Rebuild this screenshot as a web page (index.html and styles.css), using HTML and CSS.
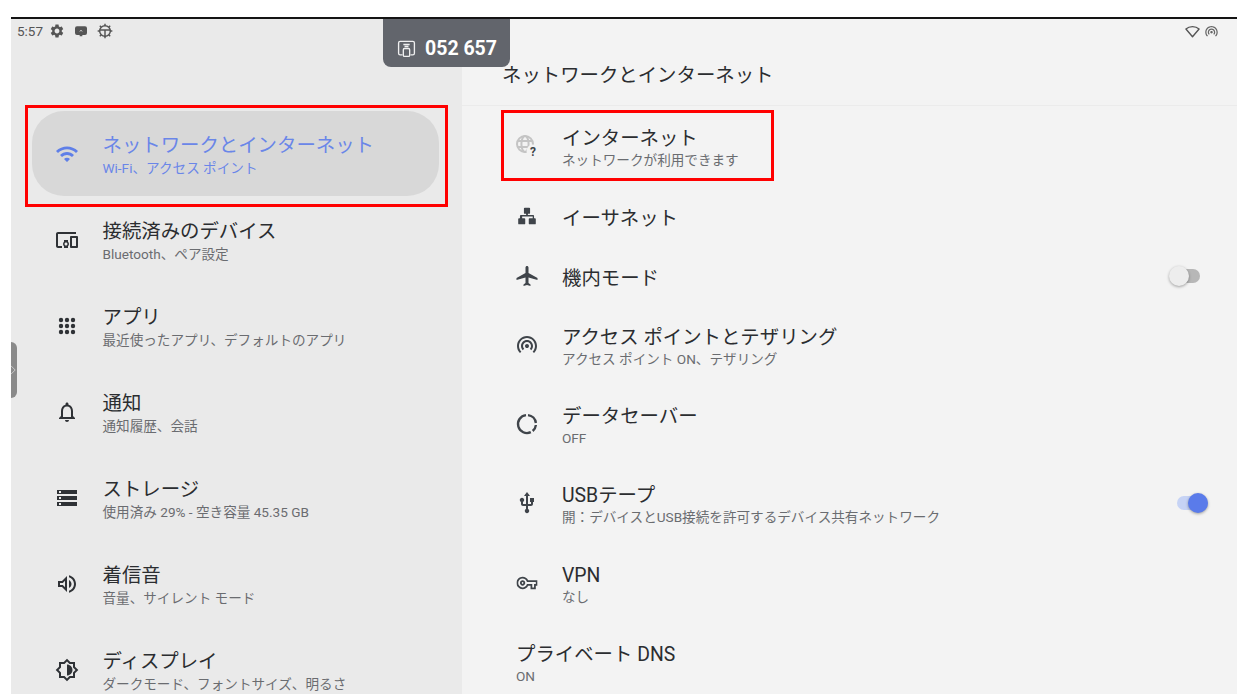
FILE: index.html
```html
<!DOCTYPE html>
<html lang="ja">
<head>
<meta charset="utf-8">
<title>ネットワークとインターネット</title>
<link rel="stylesheet" href="styles.css">
</head>
<body>
<div class="screen">
  <aside class="left">
    <div class="status">
      <span class="clock">5:57</span>
      <svg class="si" viewBox="0 0 24 24"><path d="M19.14 12.94c.04-.3.06-.61.06-.94 0-.32-.02-.64-.07-.94l2.03-1.58c.18-.14.23-.41.12-.61l-1.92-3.32c-.12-.22-.37-.29-.59-.22l-2.39.96c-.5-.38-1.03-.7-1.62-.94l-.36-2.54c-.04-.24-.24-.41-.48-.41h-3.84c-.24 0-.43.17-.47.41l-.36 2.54c-.59.24-1.13.57-1.62.94l-2.39-.96c-.22-.08-.47 0-.59.22L2.74 8.87c-.12.21-.08.47.12.61l2.03 1.58c-.05.3-.09.63-.09.94s.02.64.07.94l-2.03 1.58c-.18.14-.23.41-.12.61l1.92 3.32c.12.22.37.29.59.22l2.39-.96c.5.38 1.03.7 1.62.94l.36 2.54c.05.24.24.41.48.41h3.84c.24 0 .44-.17.47-.41l.36-2.54c.59-.24 1.13-.56 1.62-.94l2.39.96c.22.08.47 0 .59-.22l1.92-3.32c.12-.22.07-.47-.12-.61l-2.01-1.58zM12 15.6c-1.98 0-3.6-1.62-3.6-3.6s1.62-3.6 3.6-3.6 3.6 1.62 3.6 3.6-1.62 3.6-3.6 3.6z"/></svg>
      <svg class="si" viewBox="0 0 24 24"><path d="M6 5h12a3 3 0 0 1 3 3v7a3 3 0 0 1-3 3h-4v2h-4v-2H6a3 3 0 0 1-3-3V8a3 3 0 0 1 3-3z"/><path d="M10 12.500l2-1.500 2 1.500" fill="none" stroke="#eaeaea" stroke-width="1.200"/></svg>
      <svg class="si" viewBox="0 0 24 24"><g fill="none" stroke="#555" stroke-width="2.200"><circle cx="12" cy="12" r="8"/><path d="M4 10.500h16M12 10.500V20M12 1v3M12 20v3M1 12h3M20 12h3M4.200 4.200l2.200 2.200M17.600 17.600l2.200 2.200M4.200 19.800l2.200-2.200M17.600 6.400l2.200-2.200"/></g></svg>
    </div>
    <nav class="nav">
      <div class="nav-item selected">
        <svg class="icon" viewBox="0 0 24 24"><path d="M1 9l2 2c4.97-4.97 13.03-4.97 18 0l2-2C16.93 2.93 7.08 2.93 1 9zm8 8l3 3 3-3c-1.65-1.66-4.34-1.66-6 0zm-4-4l2 2c2.76-2.76 7.24-2.76 10 0l2-2C15.14 9.14 8.87 9.14 5 13z"/></svg>
        <div class="texts"><div class="title">ネットワークとインターネット</div><div class="sub">Wi-Fi、アクセス ポイント</div></div>
      </div>
      <div class="nav-item">
        <svg class="icon" viewBox="0 0 24 24"><path d="M3 6h18V4H3c-1.1 0-2 .9-2 2v12c0 1.1.9 2 2 2h4v-2H3V6zm10 6H9v1.78c-.61.55-1 1.33-1 2.22s.39 1.67 1 2.22V20h4v-1.78c.61-.55 1-1.34 1-2.22s-.39-1.67-1-2.22V12zm-2 5.5c-.83 0-1.5-.67-1.5-1.5s.67-1.5 1.5-1.5 1.5.67 1.5 1.5-.67 1.5-1.5 1.5zM22 8h-6c-.5 0-1 .5-1 1v10c0 .5.5 1 1 1h6c.5 0 1-.5 1-1V9c0-.5-.5-1-1-1zm-1 10h-4v-8h4v8z"/></svg>
        <div class="texts"><div class="title">接続済みのデバイス</div><div class="sub">Bluetooth、ペア設定</div></div>
      </div>
      <div class="nav-item">
        <svg class="icon" viewBox="0 0 24 24"><circle cx="6" cy="6" r="2.200"/><circle cx="12" cy="6" r="2.200"/><circle cx="18" cy="6" r="2.200"/><circle cx="6" cy="12" r="2.200"/><circle cx="12" cy="12" r="2.200"/><circle cx="18" cy="12" r="2.200"/><circle cx="6" cy="18" r="2.200"/><circle cx="12" cy="18" r="2.200"/><circle cx="18" cy="18" r="2.200"/></svg>
        <div class="texts"><div class="title">アプリ</div><div class="sub">最近使ったアプリ、デフォルトのアプリ</div></div>
      </div>
      <div class="nav-item">
        <svg class="icon" viewBox="0 0 24 24"><path d="M12 22c1.1 0 2-.9 2-2h-4c0 1.1.9 2 2 2zm6-6v-5c0-3.07-1.63-5.64-4.5-6.32V4c0-.83-.67-1.5-1.5-1.5s-1.5.67-1.5 1.5v.68C7.64 5.36 6 7.92 6 11v5l-2 2v1h16v-1l-2-2zm-2 1H8v-6c0-2.48 1.51-4.5 4-4.5s4 2.02 4 4.5v6z"/></svg>
        <div class="texts"><div class="title">通知</div><div class="sub">通知履歴、会話</div></div>
      </div>
      <div class="nav-item">
        <svg class="icon" viewBox="0 0 24 24"><path d="M2 20h20v-4H2v4zm2-3h2v2H4v-2zM2 4v4h20V4H2zm4 3H4V5h2v2zm-4 7h20v-4H2v4zm2-3h2v2H4v-2z"/></svg>
        <div class="texts"><div class="title">ストレージ</div><div class="sub">使用済み 29% - 空き容量 45.35 GB</div></div>
      </div>
      <div class="nav-item">
        <svg class="icon" viewBox="0 0 24 24"><path d="M3 9v6h4l5 5V4L7 9H3zm7-.17v6.34L7.83 13H5v-2h2.83L10 8.83zM16.5 12c0-1.77-1.02-3.29-2.5-4.03v8.05c1.48-.73 2.5-2.25 2.500-4.020zM14 3.230v2.060c2.890.86 5 3.540 5 6.710s-2.110 5.850-5 6.710v2.060c4.010-.91 7-4.490 7-8.770s-2.990-7.860-7-8.770z"/></svg>
        <div class="texts"><div class="title">着信音</div><div class="sub">音量、サイレント モード</div></div>
      </div>
      <div class="nav-item">
        <svg class="icon" viewBox="0 0 24 24"><path d="M20 15.31L23.31 12 20 8.69V4h-4.69L12 .69 8.69 4H4v4.69L.69 12 4 15.31V20h4.69L12 23.31 15.31 20H20v-4.69zm-2-.83V18h-3.52L12 20.48 9.52 18H6v-3.52L3.52 12 6 9.52V6h3.52L12 3.52 14.48 6H18v3.52L20.48 12 18 14.48zM12 6.5v11c3.03 0 5.5-2.47 5.5-5.5S15.03 6.5 12 6.5z"/></svg>
        <div class="texts"><div class="title">ディスプレイ</div><div class="sub">ダークモード、フォントサイズ、明るさ</div></div>
      </div>
    </nav>
  </aside>

  <main class="right">
    <div class="status status-right">
      <svg class="si-r" viewBox="0 0 24 24"><path d="M12 20.500L1.500 8C7 3 17 3 22.500 8z" fill="none" stroke="#555" stroke-width="2.200" stroke-linejoin="round"/></svg>
      <svg class="si-r" viewBox="0 0 24 24"><path d="M12 11c-1.100 0-2 .9-2 2 0 .55.23 1.050.59 1.410.36.36.86.59 1.410.59s1.050-.23 1.410-.59c.36-.36.59-.86.59-1.410 0-1.100-.9-2-2-2zm6 2c0-3.310-2.690-6-6-6s-6 2.690-6 6c0 1.660.68 3.150 1.760 4.240l1.420-1.420C8.450 15.100 8 14.110 8 13c0-2.210 1.790-4 4-4s4 1.790 4 4c0 1.110-.45 2.100-1.180 2.820l1.420 1.420C17.320 16.150 18 14.660 18 13zM12 3C6.480 3 2 7.480 2 13c0 2.760 1.120 5.260 2.930 7.070l1.420-1.420C4.900 17.210 4 15.210 4 13c0-4.420 3.580-8 8-8s8 3.580 8 8c0 2.210-.9 4.210-2.350 5.650l1.420 1.420C20.880 18.260 22 15.760 22 13c0-5.520-4.480-10-10-10z"/></svg>
    </div>
    <header class="page-title">ネットワークとインターネット</header>
    <div class="rows">
      <div class="row tall">
        <svg class="icon" viewBox="0 0 24 24"><g fill="none" stroke="#c4c4c4" stroke-width="2"><circle cx="10" cy="10" r="8"/><ellipse cx="10" cy="10" rx="3.600" ry="8"/><path d="M2.500 7h15M2.500 13h15"/></g><circle cx="18" cy="17" r="6.500" fill="#f3f3f3"/><text class="q" x="18" y="22">?</text></svg>
        <div class="texts"><div class="title">インターネット</div><div class="sub">ネットワークが利用できます</div></div>
      </div>
      <div class="row short">
        <svg class="icon icon-lan" viewBox="0 0 24 24"><path d="M9.500 2.500h5a1 1 0 0 1 1 1v5a1 1 0 0 1-1 1H13V11h6a1 1 0 0 1 1 1v2.500h1a1 1 0 0 1 1 1v5a1 1 0 0 1-1 1h-6a1 1 0 0 1-1-1v-5a1 1 0 0 1 1-1h3.500v-2h-12v2H9a1 1 0 0 1 1 1v5a1 1 0 0 1-1 1H3a1 1 0 0 1-1-1v-5a1 1 0 0 1 1-1h1V12a1 1 0 0 1 1-1h6V9.500H9.500a1 1 0 0 1-1-1v-5a1 1 0 0 1 1-1z"/></svg>
        <div class="texts"><div class="title">イーサネット</div></div>
      </div>
      <div class="row short">
        <svg class="icon" viewBox="0 0 24 24"><path d="M22.500 16v-2l-9-5V3.500c0-.83-.67-1.500-1.500-1.500s-1.500.67-1.500 1.500V9l-9 5v2l9-2.500V19l-2 1.500V22l3.500-1 3.500 1v-1.500L13.500 19v-5.500z"/></svg>
        <div class="texts"><div class="title">機内モード</div></div>
        <div class="toggle off"><span class="knob"></span></div>
      </div>
      <div class="row tall">
        <svg class="icon" viewBox="0 0 24 24"><path d="M12 11c-1.100 0-2 .9-2 2 0 .55.23 1.050.59 1.410.36.36.86.59 1.410.59s1.050-.23 1.410-.59c.36-.36.59-.86.59-1.410 0-1.100-.9-2-2-2zm6 2c0-3.310-2.690-6-6-6s-6 2.690-6 6c0 1.660.68 3.150 1.760 4.240l1.420-1.420C8.450 15.100 8 14.110 8 13c0-2.210 1.790-4 4-4s4 1.790 4 4c0 1.110-.45 2.100-1.180 2.820l1.420 1.420C17.320 16.150 18 14.660 18 13zM12 3C6.480 3 2 7.480 2 13c0 2.760 1.120 5.260 2.930 7.070l1.420-1.420C4.900 17.210 4 15.210 4 13c0-4.420 3.580-8 8-8s8 3.580 8 8c0 2.210-.9 4.210-2.350 5.650l1.420 1.420C20.880 18.260 22 15.760 22 13c0-5.520-4.480-10-10-10z"/></svg>
        <div class="texts"><div class="title">アクセス ポイントとテザリング</div><div class="sub">アクセス ポイント ON、テザリング</div></div>
      </div>
      <div class="row tall">
        <svg class="icon" viewBox="0 0 24 24"><g fill="none" stroke="#3f444a" stroke-width="2.400"><path d="M13 3.100a9 9 0 0 1 7.900 7.900"/><path d="M20.900 13a9 9 0 0 1-3.200 6"/><path d="M15.800 20.200A9 9 0 1 1 11 3.100"/></g></svg>
        <div class="texts"><div class="title">データセーバー</div><div class="sub">OFF</div></div>
      </div>
      <div class="row tall">
        <svg class="icon" viewBox="0 0 24 24"><path d="M15 7v4h1v2h-3V5h2l-3-4-3 4h2v8H8v-2.070c.7-.37 1.200-1.080 1.200-1.930 0-1.210-.99-2.200-2.200-2.200-1.210 0-2.200.99-2.200 2.200 0 .85.5 1.560 1.200 1.930V13c0 1.110.89 2 2 2h3v3.050c-.71.37-1.200 1.100-1.200 1.950 0 1.220.99 2.200 2.200 2.200 1.210 0 2.200-.98 2.200-2.200 0-.85-.49-1.580-1.200-1.950V15h3c1.110 0 2-.89 2-2v-2h1V7h-4z"/></svg>
        <div class="texts"><div class="title">USBテープ</div><div class="sub">開：デバイスとUSB接続を許可するデバイス共有ネットワーク</div></div>
        <div class="toggle on"><span class="knob"></span></div>
      </div>
      <div class="row tall">
        <svg class="icon icon-key" viewBox="0 0 24 24"><path d="M22 19h-6v-4h-2.680c-1.140 2.420-3.600 4-6.320 4-3.860 0-7-3.140-7-7s3.140-7 7-7c2.720 0 5.170 1.580 6.320 4H24v6h-2v4zm-4-2h2v-4h2v-2H11.940l-.23-.67C11.010 8.340 9.110 7 7 7c-2.760 0-5 2.240-5 5s2.240 5 5 5c2.110 0 4.010-1.340 4.710-3.330l.23-.67H18v4zM7 15c-1.650 0-3-1.350-3-3s1.350-3 3-3 3 1.350 3 3-1.350 3-3 3zm0-4c-.55 0-1 .45-1 1s.45 1 1 1 1-.45 1-1-.45-1-1-1z"/></svg>
        <div class="texts"><div class="title">VPN</div><div class="sub">なし</div></div>
      </div>
      <div class="row tall no-icon">
        <div class="texts"><div class="title">プライベート DNS</div><div class="sub">ON</div></div>
      </div>
    </div>
  </main>

  <div class="pin-badge">
    <svg class="pin-icon" viewBox="0 0 24 24"><g fill="none" stroke="#fff" stroke-width="1.700" opacity=".9"><path d="M7 20H4a2 2 0 0 1-2-2V5a2 2 0 0 1 2-2h16a2 2 0 0 1 2 2v13a2 2 0 0 1-2 2h-3"/><path d="M8 7h8M9.500 9.500h5"/><rect x="8" y="12" width="8" height="10" rx="1.500"/></g></svg>
    <span>052 657</span>
  </div>
  <div class="edge-handle"><svg class="edge-chev" viewBox="0 0 6 12"><path d="M0 1l5 5-5 5" fill="none" stroke="#c8c8c8" stroke-width="1.200"/></svg></div>
  <div class="mark mark-nav"></div>
  <div class="mark mark-row"></div>
</div>
</body>
</html>
```
FILE: styles.css
```css
* { box-sizing: border-box; }
html, body { margin: 0; height: 100%; overflow: hidden; background: #fff; }
body {
  font-family: Roboto, "Noto Sans CJK JP", sans-serif;
  padding: 17px 0 0 11px;
}
.screen {
  position: relative;
  display: flex;
  height: 677px;
  border-top: 2px solid #141414;
  overflow: hidden;
}
.left { width: 451px; flex: none; background: #eaeaea; }
.right { flex: 1; background: #f3f3f3; min-width: 0; }

.status { display: flex; align-items: center; height: 24px; padding-left: 6px; color: #555; }
.clock { font-size: 13.500px; margin-right: 6px; }
.si { width: 16px; height: 16px; fill: #555; margin-right: 8px; }
.status-right { justify-content: flex-end; gap: 4px; padding: 0 18px 0 0; }
.si-r { width: 15px; height: 15px; fill: #666; }

.nav { padding: 68px 23px 0 21px; }
.nav-item { display: flex; align-items: center; height: 86px; padding-left: 23px; gap: 23.500px; }
.nav-item .texts { padding-top: 3px; }
.nav-item .sub { margin-top: -1px; }
.nav-item.selected { height: 85px; margin-bottom: 1px; background: #d8d8d8; border-radius: 32px; }
.nav-item.selected .icon { fill: #5f7fe8; }
.nav-item.selected .title, .nav-item.selected .sub { color: #6a86e8; }
.icon { width: 24px; height: 24px; flex: none; fill: #3f444a; }
.nav .icon { fill: #2f3236; }

.texts { min-width: 0; }
.title { font-size: 19.400px; line-height: 26px; color: #2b2d30; white-space: nowrap; }
.sub { font-size: 13.600px; line-height: 20px; color: #6a6c70; white-space: nowrap; }

.page-title { height: 63px; padding: 20px 0 0 40px; font-size: 19.400px; line-height: 26px; color: #2b2d30; border-bottom: 1px solid #ebebeb; }

.rows { display: flex; flex-direction: column; }
.row { position: relative; display: flex; align-items: center; padding-left: 53px; gap: 23px; }
.row .texts { padding-top: 4px; }
.row .sub { margin-top: -2px; }
.row.short .texts { padding-top: 6px; }
.icon-lan { transform: scale(.88); }
.icon-key { transform: scale(.88); }
.row.tall { height: 79.200px; }
.row.tall:first-child { height: 80.200px; }
.row.short { height: 59.600px; }
.row.no-icon { padding-left: 54px; }
.q { font: 700 12px Roboto, sans-serif; fill: #3f444a; text-anchor: middle; }

.toggle { position: absolute; top: 50%; border-radius: 7px; height: 14px; transform: translateY(-50%); }
.toggle.off { left: 710px; width: 28px; background: #b7b7b7; }
.toggle.on { left: 715px; width: 31px; background: #c6d3f5; }
.knob { position: absolute; top: -3px; width: 20px; height: 20px; border-radius: 50%; box-shadow: 0 1px 3px rgba(0, 0, 0, .35); }
.toggle.off .knob { left: -3px; background: #ededed; }
.toggle.on .knob { right: 0; background: #5a7bea; }

.pin-badge {
  position: absolute; left: 372px; top: 0; width: 127px; height: 48px;
  display: flex; align-items: center; gap: 9px; padding: 11px 0 0 14px;
  background: #62656c; border-radius: 0 0 8px 8px;
  color: #fff; font-size: 19.500px; font-weight: 700;
}
.pin-icon { width: 19px; height: 19px; flex: none; }
.edge-handle {
  position: absolute; left: 0; top: 323px; width: 6px; height: 56px;
  display: flex; align-items: center;
  background: #8a8a8a; border-radius: 0 8px 8px 0;
}
.edge-chev { width: 5px; height: 10px; }
.mark { position: absolute; border: 3px solid #f00; }
.mark-nav { left: 14px; top: 86px; width: 423px; height: 102px; }
.mark-row { left: 490px; top: 91px; width: 273px; height: 71px; }
```
